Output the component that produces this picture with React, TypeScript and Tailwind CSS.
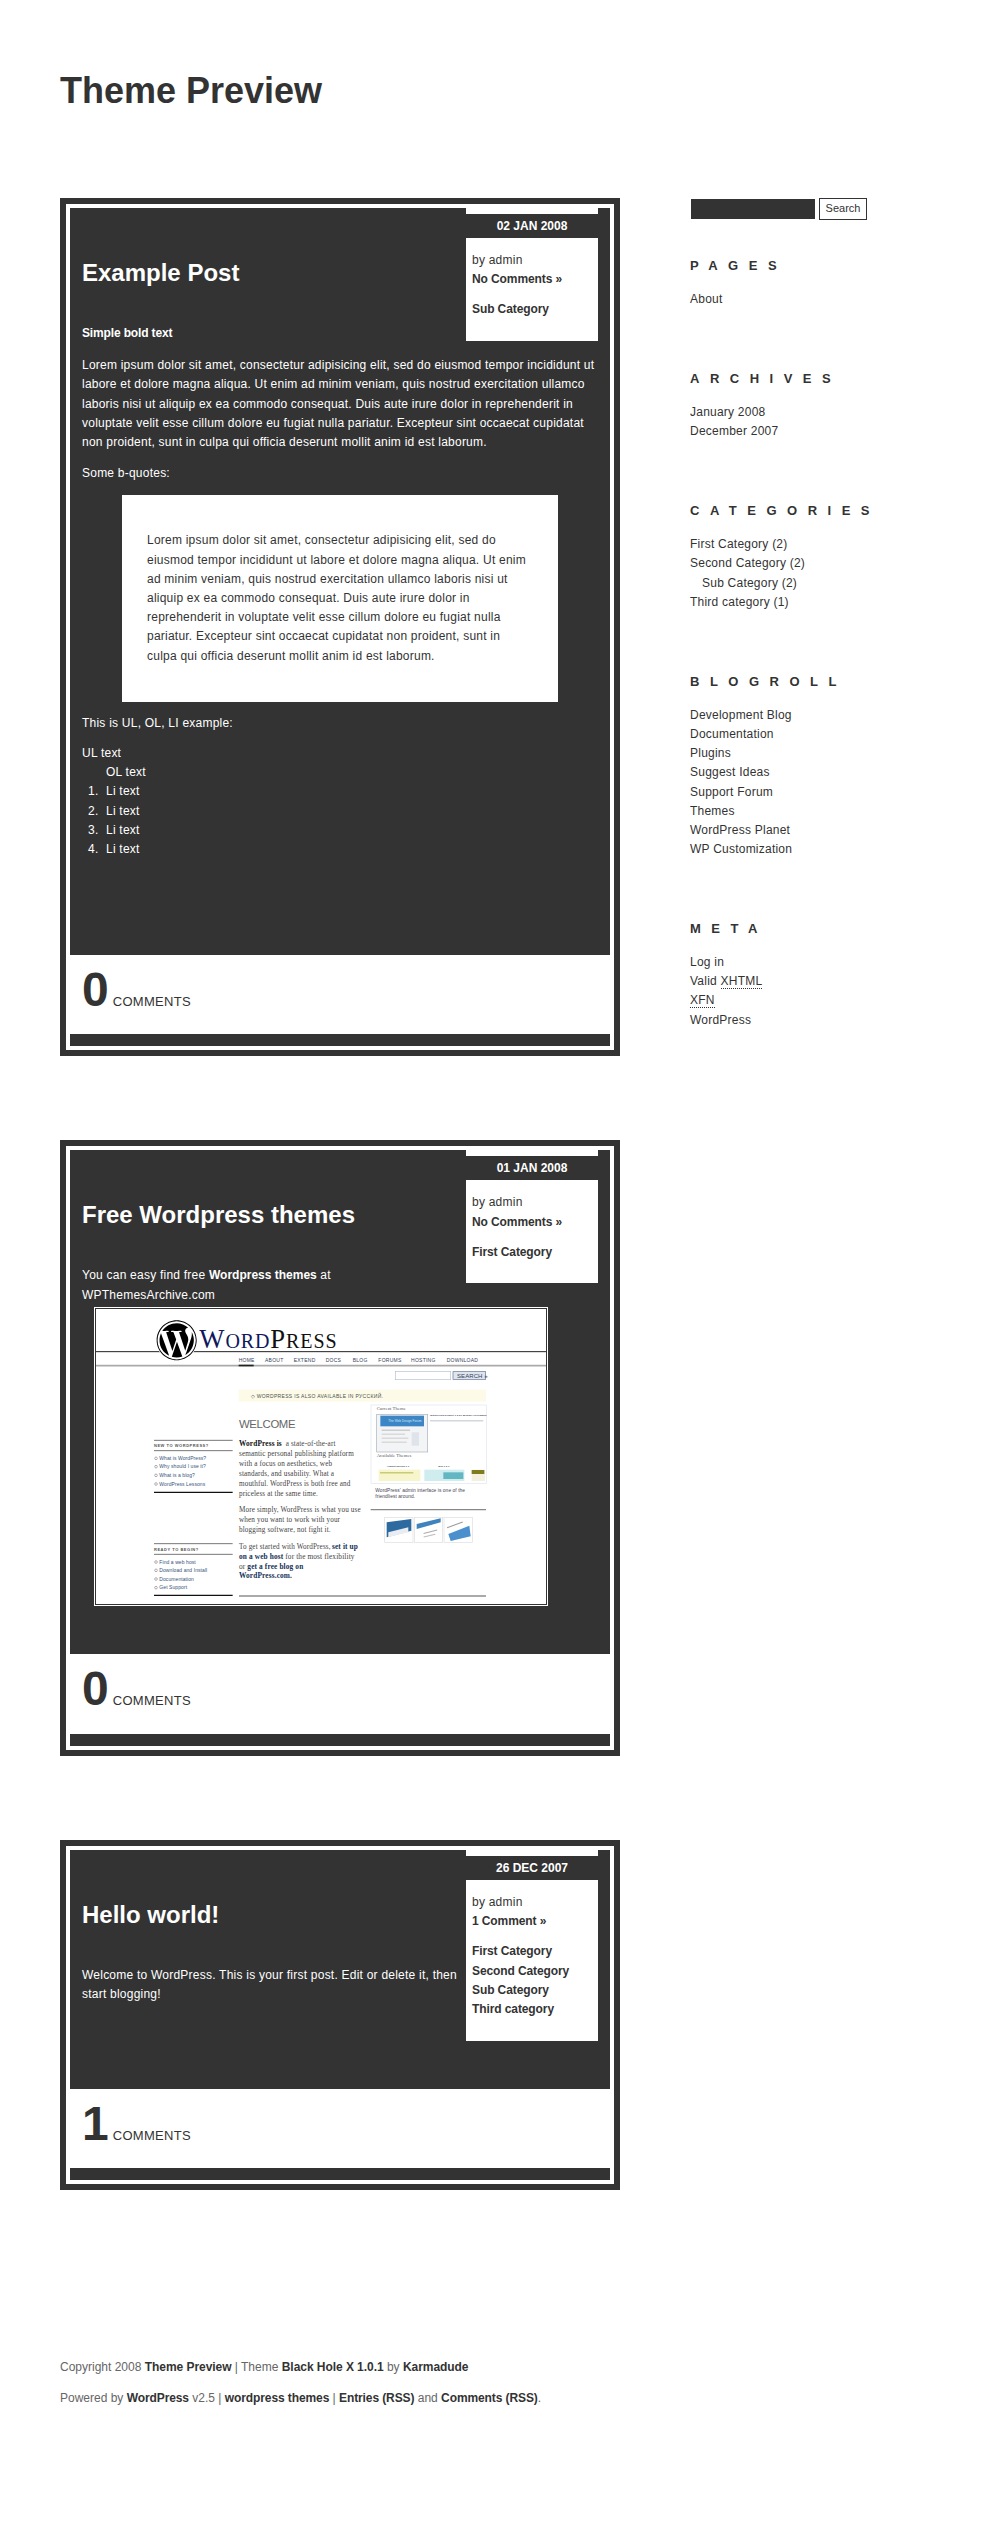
import type { ReactNode } from "react";
import { FaWordpress } from "react-icons/fa";

const FONT = "font-['Liberation_Sans',Arial,sans-serif]";

type PostProps = {
  date: string;
  comments: string;
  count: number;
  categories: string[];
  title: string;
  children: ReactNode;
};

function Post({ date, comments, count, categories, title, children }: PostProps) {
  return (
    <article className="border-[6px] border-[#333333] bg-white p-1">
      <div className="flow-root bg-[#333333] px-3 pb-12 text-[12px] leading-[19.2px] tracking-[0.23px] text-white">
        {/* Date + meta box floats so the text wraps under it */}
        <aside className="float-right w-[132px]">
          <div className="h-1.5 bg-white" />
          <div className="h-6 text-center leading-[24px] font-bold tracking-normal">{date}</div>
          <div className="bg-white pt-[13px] pb-[21.4px] pl-[6px] text-[#333333]">
            <p>by admin</p>
            <p className="font-bold tracking-[-0.1px]">{comments}</p>
            <ul className="mt-[11px] font-bold tracking-[-0.1px]">
              {categories.map((c) => (
                <li key={c}>{c}</li>
              ))}
            </ul>
          </div>
        </aside>
        <h2 className="pt-[50px] text-[24px] leading-[30px] font-bold tracking-normal">{title}</h2>
        <div className="pt-[36px]">{children}</div>
      </div>
      <div className="flex h-[79.6px] items-baseline pt-2 pl-3 text-[#333333]">
        <span className="text-[48px] leading-[54px] font-bold">{count}</span>
        <span className="ml-[4px] text-[13px] tracking-[0.3px]">COMMENTS</span>
      </div>
      <div className="h-3 bg-[#333333]" />
    </article>
  );
}

function SideBlock({ title, children }: { title: string; children: ReactNode }) {
  return (
    <section className="mb-[59.5px]">
      <h3 className="mb-[15px] text-[13px] font-bold tracking-[10.5px]">{title}</h3>
      <ul className="tracking-[0.23px]">{children}</ul>
    </section>
  );
}

// Old wordpress.org home page, shown as the post's picture. Coordinates are 3x pixels.
function WordpressShot() {
  const sans = "'Liberation Sans', Arial, sans-serif";
  const serif = "'Liberation Serif', 'Times New Roman', serif";
  const nav: [string, number][] = [
    ["HOME", 476],
    ["ABOUT", 555],
    ["EXTEND", 641],
    ["DOCS", 737],
    ["BLOG", 818],
    ["FORUMS", 895],
    ["HOSTING", 993],
    ["DOWNLOAD", 1100],
  ];
  const leftA: [string, number][] = [
    ["What is WordPress?", 483],
    ["Why should I use it?", 508],
    ["What is a blog?", 534],
    ["WordPress Lessons", 560],
  ];
  const leftB: [string, number][] = [
    ["Find a web host", 794],
    ["Download and Install", 819],
    ["Documentation", 845],
    ["Get Support", 871],
  ];
  const body: [string, number][] = [
    ["a state-of-the-art", 441],
    ["semantic personal publishing platform", 471],
    ["with a focus on aesthetics, web", 501],
    ["standards, and usability. What a", 531],
    ["mouthful. WordPress is both free and", 561],
    ["priceless at the same time.", 591],
    ["More simply, WordPress is what you use", 640],
    ["when you want to work with your", 670],
    ["blogging software, not fight it.", 700],
    ["To get started with WordPress,", 750],
  ];
  return (
    <svg viewBox="48 30 1350 885" className="block h-[295px] w-[450px] bg-white">
      <line x1="48" y1="158" x2="1398" y2="158" stroke="#222" strokeWidth="3" />
      <line x1="48" y1="200" x2="1398" y2="200" stroke="#aaa" strokeWidth="5" />
      <rect x="476" y="197" width="45" height="5" fill="#222" />
      <circle cx="290" cy="124" r="62" fill="#fff" />
      <FaWordpress x="228" y="62" size={124} color="#000" />
      <text x="358" y="146" fontFamily={serif} fill="#10185e" fontSize="60" letterSpacing="2.7">
        <tspan fontSize="80">W</tspan>ORD<tspan fontSize="80" fill="#111">P</tspan>
        <tspan fill="#111">RESS</tspan>
      </text>
      {nav.map(([t, x]) => (
        <text key={t} x={x} y="188" fontFamily={sans} fontSize="15" letterSpacing="0.8" fill="#33405a">
          {t}
        </text>
      ))}
      <rect x="946" y="217" width="166" height="25" fill="#fff" stroke="#b4c0cc" strokeWidth="2" />
      <rect x="1119" y="218" width="98" height="23" fill="#dfe5ee" stroke="#5d7290" strokeWidth="2" />
      <text x="1131" y="236" fontFamily={sans} fontSize="18" fill="#33405a">
        SEARCH »
      </text>
      <rect x="476" y="272" width="742" height="36" fill="#fdfbe8" />
      <text x="512" y="296" fontFamily={sans} fontSize="15" letterSpacing="1" fill="#4a5250">
        ◇ WORDPRESS IS ALSO AVAILABLE IN РУССКИЙ.
      </text>
      <text x="477" y="388" fontFamily={sans} fontSize="34" letterSpacing="-1" fill="#666">
        WELCOME
      </text>

      {/* Left column link lists */}
      <line x1="222" y1="424" x2="458" y2="424" stroke="#777" strokeWidth="3" />
      <text x="222" y="444" fontFamily={sans} fontSize="12" letterSpacing="1.6" fontWeight="700" fill="#555">
        NEW TO WORDPRESS?
      </text>
      <line x1="222" y1="455" x2="458" y2="455" stroke="#777" strokeWidth="3" />
      {leftA.map(([t, y]) => (
        <g key={t}>
          <circle cx="228" cy={y - 5} r="4" fill="none" stroke="#667" strokeWidth="1.5" />
          <text x="238" y={y} fontFamily={sans} fontSize="15" fill="#36527a">
            {t}
          </text>
        </g>
      ))}
      <line x1="222" y1="580" x2="458" y2="580" stroke="#111" strokeWidth="4" />
      <line x1="222" y1="734" x2="458" y2="734" stroke="#777" strokeWidth="3" />
      <text x="222" y="755" fontFamily={sans} fontSize="12" letterSpacing="1.6" fontWeight="700" fill="#555">
        READY TO BEGIN?
      </text>
      <line x1="222" y1="766" x2="458" y2="766" stroke="#777" strokeWidth="3" />
      {leftB.map(([t, y]) => (
        <g key={t}>
          <circle cx="228" cy={y - 5} r="4" fill="none" stroke="#667" strokeWidth="1.5" />
          <text x="238" y={y} fontFamily={sans} fontSize="15" fill="#36527a">
            {t}
          </text>
        </g>
      ))}
      <line x1="222" y1="889" x2="458" y2="889" stroke="#111" strokeWidth="4" />

      {/* Middle column copy */}
      <text x="477" y="441" fontFamily={serif} fontSize="22" fontWeight="700" letterSpacing="0.4" fill="#111">
        WordPress is
      </text>
      {body.map(([t, y], i) => (
        <text
          key={t}
          x={i === 0 ? 617 : 477}
          y={y}
          fontFamily={serif}
          fontSize="21.5"
          letterSpacing="0.4"
          fill="#444"
        >
          {t}
        </text>
      ))}
      <text x="756" y="750" fontFamily={serif} fontSize="22" fontWeight="700" letterSpacing="0.4" fill="#143057">
        set it up
      </text>
      <text x="477" y="780" fontFamily={serif} fontSize="22" letterSpacing="0.4" fill="#444">
        <tspan fontWeight="700" fill="#143057">on a web host</tspan> for the most flexibility
      </text>
      <text x="477" y="810" fontFamily={serif} fontSize="22" letterSpacing="0.4" fill="#444">
        or <tspan fontWeight="700" fill="#143057">get a free blog on</tspan>
      </text>
      <text x="477" y="838" fontFamily={serif} fontSize="22" fontWeight="700" letterSpacing="0.4" fill="#143057">
        WordPress.com.
      </text>
      <line x1="477" y1="891" x2="1218" y2="891" stroke="#333" strokeWidth="2.5" />

      {/* Admin screenshot block */}
      <rect x="873" y="318" width="346" height="235" fill="#fff" stroke="#dfe6ee" strokeWidth="2" />
      <text x="890" y="333" fontFamily={serif} fontSize="14" fill="#555">
        Current Theme
      </text>
      <rect x="890" y="346" width="153" height="113" fill="#f3f4f6" stroke="#a8b0bb" strokeWidth="2" />
      <rect x="901" y="350" width="131" height="32" fill="#3c86c6" />
      <text x="925" y="369" fontFamily={sans} fontSize="9" fill="#dbe9f5">
        The Web Design Forum
      </text>
      <rect x="905" y="392" width="85" height="3" fill="#bbb" />
      <rect x="905" y="404" width="70" height="3" fill="#ccc" />
      <rect x="905" y="416" width="80" height="3" fill="#ccc" />
      <rect x="905" y="428" width="75" height="3" fill="#ccc" />
      <rect x="995" y="400" width="22" height="40" fill="#dfe3ea" />
      <text x="1050" y="352" fontFamily={sans} fontSize="7.5" fontWeight="700" fill="#445">
        WordPress Default 1.6 by Michael Heilemann
      </text>
      <rect x="1050" y="364" width="160" height="3" fill="#bcc5d0" />
      <text x="890" y="475" fontFamily={serif} fontSize="14" fill="#555">
        Available Themes
      </text>
      <text x="920" y="503" fontFamily={sans} fontSize="7.5" fontWeight="700" fill="#445">
        Almost Spring 1.1
      </text>
      <text x="1075" y="503" fontFamily={sans} fontSize="7.5" fontWeight="700" fill="#445">
        Mia 1.3.1
      </text>
      <rect x="896" y="512" width="125" height="34" fill="#f6f5cc" />
      <rect x="900" y="520" width="100" height="3" fill="#b4b84a" />
      <rect x="1033" y="512" width="120" height="34" fill="#cfecef" />
      <rect x="1090" y="520" width="60" height="20" fill="#62b7c2" />
      <rect x="1175" y="512" width="40" height="34" fill="#f3f1dd" />
      <rect x="1175" y="513" width="38" height="12" fill="#7e7c1e" />
      <text x="886" y="578" fontFamily={sans} fontSize="14.5" fill="#445">
        WordPress' admin interface is one of the
      </text>
      <text x="886" y="596" fontFamily={sans} fontSize="14.5" fill="#445">
        friendliest around.
      </text>
      <line x1="872" y1="632" x2="1218" y2="632" stroke="#888" strokeWidth="4" />

      {/* Three thumbnails */}
      <rect x="914" y="655" width="85" height="75" fill="#fff" stroke="#ddd" strokeWidth="2" />
      <polygon points="920,670 994,660 994,695 920,715" fill="#2d6aa0" />
      <polygon points="925,700 985,685 985,700 925,715" fill="#e9edf1" />
      <rect x="1003" y="655" width="85" height="75" fill="#fff" stroke="#ddd" strokeWidth="2" />
      <polygon points="1010,675 1082,658 1082,670 1010,690" fill="#3f83bd" />
      <rect x="1030" y="697" width="42" height="3" fill="#aaa" transform="rotate(-14 1050 698)" />
      <rect x="1030" y="708" width="36" height="3" fill="#bbb" transform="rotate(-14 1050 708)" />
      <rect x="1092" y="655" width="85" height="75" fill="#fff" stroke="#ddd" strokeWidth="2" />
      <polygon points="1105,705 1168,680 1172,712 1112,726" fill="#4b90cc" />
      <rect x="1100" y="676" width="50" height="3" fill="#999" transform="rotate(-20 1125 678)" />
    </svg>
  );
}

export default function App() {
  return (
    <div className={`min-h-[2540px] bg-white pt-[69px] pl-[60px] text-[12px] leading-[19.2px] text-[#333333] ${FONT}`}>
      <h1 className="mb-[85px] text-[36px] leading-[44px] font-bold">Theme Preview</h1>

      <div className="flex items-start">
        <main className="flex w-[560px] flex-col gap-[84px]">
          <Post
            date="02 JAN 2008"
            comments="No Comments »"
            count={0}
            categories={["Sub Category"]}
            title="Example Post"
          >
            <p className="mb-[13px] font-bold tracking-[-0.15px]">Simple bold text</p>
            <p className="mb-3">
              Lorem ipsum dolor sit amet, consectetur adipisicing elit, sed do eiusmod tempor incididunt ut labore et
              dolore magna aliqua. Ut enim ad minim veniam, quis nostrud exercitation ullamco laboris nisi ut aliquip
              ex ea commodo consequat. Duis aute irure dolor in reprehenderit in voluptate velit esse cillum dolore eu
              fugiat nulla pariatur. Excepteur sint occaecat cupidatat non proident, sunt in culpa qui officia deserunt
              mollit anim id est laborum.
            </p>
            <p>Some b-quotes:</p>
            <blockquote className="mt-3 ml-10 w-[436px] bg-white px-[25px] py-9 text-[#333333]">
              Lorem ipsum dolor sit amet, consectetur adipisicing elit, sed do eiusmod tempor incididunt ut labore et
              dolore magna aliqua. Ut enim ad minim veniam, quis nostrud exercitation ullamco laboris nisi ut aliquip
              ex ea commodo consequat. Duis aute irure dolor in reprehenderit in voluptate velit esse cillum dolore eu
              fugiat nulla pariatur. Excepteur sint occaecat cupidatat non proident, sunt in culpa qui officia deserunt
              mollit anim id est laborum.
            </blockquote>
            <p className="mt-3 mb-[11px]">This is UL, OL, LI example:</p>
            <div>UL text</div>
            <div className="pl-6">OL text</div>
            <ol className="mb-[47.6px]">
              {[1, 2, 3, 4].map((n) => (
                <li key={n} className="flex">
                  <span className="w-6 pl-[6px]">{n}.</span>
                  Li text
                </li>
              ))}
            </ol>
          </Post>

          <Post
            date="01 JAN 2008"
            comments="No Comments »"
            count={0}
            categories={["First Category"]}
            title="Free Wordpress themes"
          >
            <p>
              You can easy find free <strong className="tracking-normal">Wordpress themes</strong> at
              <br />
              WPThemesArchive.com
            </p>
            <div className="mt-[2.5px] ml-3 w-[454px] border border-white">
              <div className="border border-[#333333]">
                <WordpressShot />
              </div>
            </div>
          </Post>

          <Post
            date="26 DEC 2007"
            comments="1 Comment »"
            count={1}
            categories={["First Category", "Second Category", "Sub Category", "Third category"]}
            title="Hello world!"
          >
            <p>
              Welcome to WordPress. This is your first post. Edit or delete it, then
              <br />
              start blogging!
            </p>
          </Post>
        </main>

        <aside className="ml-[70px] w-[250px]">
          <form className="mb-[36px] flex items-center">
            <input aria-label="Search" className="ml-px h-5 w-[124px] bg-[#333333]" />
            <button type="button" className="ml-1 h-[22px] w-[48px] border border-[#333333] text-[11px]">
              Search
            </button>
          </form>
          <SideBlock title="PAGES">
            <li>About</li>
          </SideBlock>
          <SideBlock title="ARCHIVES">
            <li>January 2008</li>
            <li>December 2007</li>
          </SideBlock>
          <SideBlock title="CATEGORIES">
            <li>First Category (2)</li>
            <li>Second Category (2)</li>
            <li className="pl-3">Sub Category (2)</li>
            <li>Third category (1)</li>
          </SideBlock>
          <SideBlock title="BLOGROLL">
            <li>Development Blog</li>
            <li>Documentation</li>
            <li>Plugins</li>
            <li>Suggest Ideas</li>
            <li>Support Forum</li>
            <li>Themes</li>
            <li>WordPress Planet</li>
            <li>WP Customization</li>
          </SideBlock>
          <SideBlock title="META">
            <li>Log in</li>
            <li>
              Valid <abbr className="border-b border-dotted border-[#333333] no-underline">XHTML</abbr>
            </li>
            <li>
              <abbr className="border-b border-dotted border-[#333333] no-underline">XFN</abbr>
            </li>
            <li>WordPress</li>
          </SideBlock>
        </aside>
      </div>

      <footer className="pt-[168px] text-[#666666]">
        <p className="mb-3">
          Copyright 2008 <b className="tracking-[-0.05px] text-[#333333]">Theme Preview</b> | Theme{" "}
          <b className="tracking-[-0.05px] text-[#333333]">Black Hole X 1.0.1</b> by{" "}
          <b className="tracking-[-0.05px] text-[#333333]">Karmadude</b>
        </p>
        <p>
          Powered by <b className="tracking-[-0.1px] text-[#333333]">WordPress</b> v2.5 |{" "}
          <b className="tracking-[-0.1px] text-[#333333]">wordpress themes</b> |{" "}
          <b className="tracking-[-0.1px] text-[#333333]">Entries (RSS)</b> and{" "}
          <b className="tracking-[-0.1px] text-[#333333]">Comments (RSS)</b>.
        </p>
      </footer>
    </div>
  );
}
